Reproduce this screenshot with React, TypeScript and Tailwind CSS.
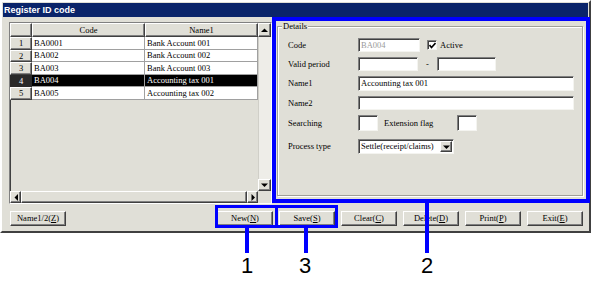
import React from "react";

const raised =
  "border border-t-white border-l-white border-b-[#404040] border-r-[#404040] shadow-[inset_-1px_-1px_0_#808080]";
const sunken =
  "border border-t-[#808080] border-l-[#808080] border-b-white border-r-white shadow-[inset_1px_1px_0_#404040]";
const field =
  "border border-t-[#808080] border-l-[#808080] border-b-[#f4f4f0] border-r-[#f4f4f0] shadow-[inset_1px_1px_0_#404040] bg-white";

const rows = [
  { n: "1", code: "BA0001", name: "Bank Account 001" },
  { n: "2", code: "BA002", name: "Bank Account 002" },
  { n: "3", code: "BA003", name: "Bank Account 003" },
  { n: "4", code: "BA004", name: "Accounting tax 001", selected: true },
  { n: "5", code: "BA005", name: "Accounting tax 002" },
];

function Arrow({ dir }: { dir: "up" | "down" | "left" | "right" }) {
  const pts = {
    up: "0,4 7,4 3.5,0.5",
    down: "0,0.5 7,0.5 3.5,4",
    left: "4,0 4,7 0.5,3.5",
    right: "0.5,0 0.5,7 4,3.5",
  }[dir];
  const vertical = dir === "up" || dir === "down";
  return (
    <svg width={vertical ? 7 : 4} height={vertical ? 4 : 7} viewBox={vertical ? "0 0 7 4" : "0 0 4 7"}>
      <polygon points={pts} fill="#000" />
    </svg>
  );
}

function Grid() {
  return (
    <div className={`w-[263px] h-[182px] flex bg-[#e0dfd7] ${sunken}`}>
      <div className="w-[248px] flex flex-col">
        <div className="flex h-[14px]">
          <div className={`w-[22px] bg-[#e0dfd7] ${raised}`} />
          <div className={`w-[113px] flex items-center justify-center bg-[#e0dfd7] ${raised}`}>Code</div>
          <div className={`w-[113px] flex items-center justify-center bg-[#e0dfd7] ${raised}`}>Name1</div>
        </div>
        {rows.map((r) => (
          <div key={r.n} className="flex h-[12.6px]">
            <div
              className={`w-[22px] flex items-center justify-center ${
                r.selected ? "bg-[#2a2a2a] text-white border border-[#2a2a2a]" : `bg-[#e0dfd7] ${raised}`
              }`}
            >
              {r.n}
            </div>
            <div
              className={`w-[113px] flex items-center pl-[2px] border-r border-b border-[#a0a0a0] ${
                r.selected ? "bg-black text-white" : "bg-white"
              }`}
            >
              {r.code}
            </div>
            <div
              className={`w-[113px] flex items-center pl-[2px] border-r border-b border-[#a0a0a0] ${
                r.selected ? "bg-black text-white" : "bg-white"
              }`}
            >
              {r.name}
            </div>
          </div>
        ))}
        <div className="flex-1" />
        <div className="h-[12px] flex">
          <div className={`w-[11px] flex items-center justify-center bg-[#e0dfd7] ${raised}`}>
            <Arrow dir="left" />
          </div>
          <div className={`flex-1 bg-[#e0dfd7] ${raised}`} />
          <div className={`w-[11px] flex items-center justify-center bg-[#e0dfd7] ${raised}`}>
            <Arrow dir="right" />
          </div>
        </div>
      </div>
      <div className="w-[13px] flex flex-col">
        <div className={`h-[14px] flex items-center justify-center bg-[#e0dfd7] ${raised}`}>
          <Arrow dir="up" />
        </div>
        <div className="flex-1 bg-[#eeede8] border-l border-[#d0cfc8]" />
        <div className={`h-[12px] flex items-center justify-center bg-[#e0dfd7] ${raised}`}>
          <Arrow dir="down" />
        </div>
        <div className="h-[12px] bg-[#e0dfd7]" />
      </div>
    </div>
  );
}

function Details() {
  return (
    <div className="relative mt-[4px] w-[306px] h-[170px] border border-[#a09f98] shadow-[inset_1px_1px_0_#ffffff,1px_1px_0_#ffffff]">
      <span className="absolute -top-[6px] left-[4px] px-[1px] bg-[#e0dfd7] leading-[10px]">Details</span>
      <div className="flex flex-col pl-[10px] pt-[11px]">
        <div className="flex items-center h-[14px]">
          <span className="w-[70px]">Code</span>
          <div className={`w-[62px] h-[14px] flex items-center pl-[2px] text-[#9a9a9a] ${field}`}>BA004</div>
          <div className={`ml-[7px] w-[10px] h-[10px] flex items-center justify-center ${field}`}>
            <svg width="7" height="7" viewBox="0 0 7 7">
              <polyline points="0.5,3 2.5,5.5 6.5,1" fill="none" stroke="#000" strokeWidth="1.6" />
            </svg>
          </div>
          <span className="ml-[3px]">Active</span>
        </div>
        <div className="flex items-center h-[14px] mt-[5px]">
          <span className="w-[70px]">Valid period</span>
          <div className={`w-[60px] h-[14px] ${field}`} />
          <span className="w-[19px] text-center">-</span>
          <div className={`w-[59px] h-[14px] ${field}`} />
        </div>
        <div className="flex items-center h-[15px] mt-[5px]">
          <span className="w-[70px]">Name1</span>
          <div className={`w-[216px] h-[15px] flex items-center pl-[2px] ${field}`}>Accounting tax 001</div>
        </div>
        <div className="flex items-center h-[14px] mt-[5px]">
          <span className="w-[70px]">Name2</span>
          <div className={`w-[216px] h-[14px] ${field}`} />
        </div>
        <div className="flex items-center h-[16px] mt-[5px]">
          <span className="w-[70px]">Searching</span>
          <div className={`w-[20px] h-[16px] ${field}`} />
          <span className="ml-[6px] w-[73px]">Extension flag</span>
          <div className={`w-[20px] h-[16px] ${field}`} />
        </div>
        <div className="flex items-center h-[15px] mt-[8px]">
          <span className="w-[70px]">Process type</span>
          <div className={`w-[96px] h-[15px] flex items-center ${field}`}>
            <span className="flex-1 pl-[2px] whitespace-nowrap">Settle(receipt/claims)</span>
            <div className={`w-[12px] h-[11px] mr-[1px] flex items-center justify-center bg-[#e0dfd7] ${raised}`}>
              <Arrow dir="down" />
            </div>
          </div>
        </div>
      </div>
    </div>
  );
}

function Btn({ label, k }: { label: string; k: string }) {
  return (
    <div className={`w-[56px] h-[15px] flex items-center justify-center bg-[#e0dfd7] ${raised}`}>
      {label}(<span className="underline">{k}</span>)
    </div>
  );
}

export default function App() {
  return (
    <div className="relative w-[593px] h-[283px] bg-white text-[8.5px] leading-none text-black font-['Liberation_Serif',serif]">
      <div className="w-[591px] h-[233px] flex flex-col p-[1px] bg-[#e0dfd7] border-2 border-t-white border-l-white border-b-[#404040] border-r-[#404040]">
        <div className="h-[14px] bg-[#0a246a] flex items-center pl-[1px] text-white font-bold text-[9px] font-['Liberation_Sans',sans-serif]">
          Register ID code
        </div>
        <div className="flex gap-[5px] pl-[6px] pr-[5px] pt-[5px]">
          <Grid />
          <Details />
        </div>
        <div className="flex mt-[7px] pl-[7px] pr-[5px]">
          <Btn label="Name1/2" k="Z" />
          <div className="ml-auto flex gap-[6px]">
            <Btn label="New" k="N" />
            <Btn label="Save" k="S" />
            <Btn label="Clear" k="C" />
            <Btn label="Delete" k="D" />
            <Btn label="Print" k="P" />
            <Btn label="Exit" k="E" />
          </div>
        </div>
      </div>

      {/* annotation callouts */}
      <div className="absolute left-[272px] top-[17px] w-[318px] h-[186px] border-4 border-[#0000ff]" />
      <div className="absolute left-[215px] top-[205px] w-[63px] h-[23px] border-[3px] border-[#0000ff]" />
      <div className="absolute left-[275px] top-[205px] w-[63px] h-[23px] border-[3px] border-[#0000ff]" />
      <div className="absolute left-[245px] top-[228px] w-[4px] h-[25px] bg-[#0000ff]" />
      <div className="absolute left-[304px] top-[228px] w-[4px] h-[25px] bg-[#0000ff]" />
      <div className="absolute left-[425px] top-[203px] w-[4px] h-[50px] bg-[#0000ff]" />
      <span className="absolute left-[241px] top-[255px] text-[22px] leading-none font-['Liberation_Sans',sans-serif]">1</span>
      <span className="absolute left-[299px] top-[255px] text-[22px] leading-none font-['Liberation_Sans',sans-serif]">3</span>
      <span className="absolute left-[421px] top-[255px] text-[22px] leading-none font-['Liberation_Sans',sans-serif]">2</span>
    </div>
  );
}
